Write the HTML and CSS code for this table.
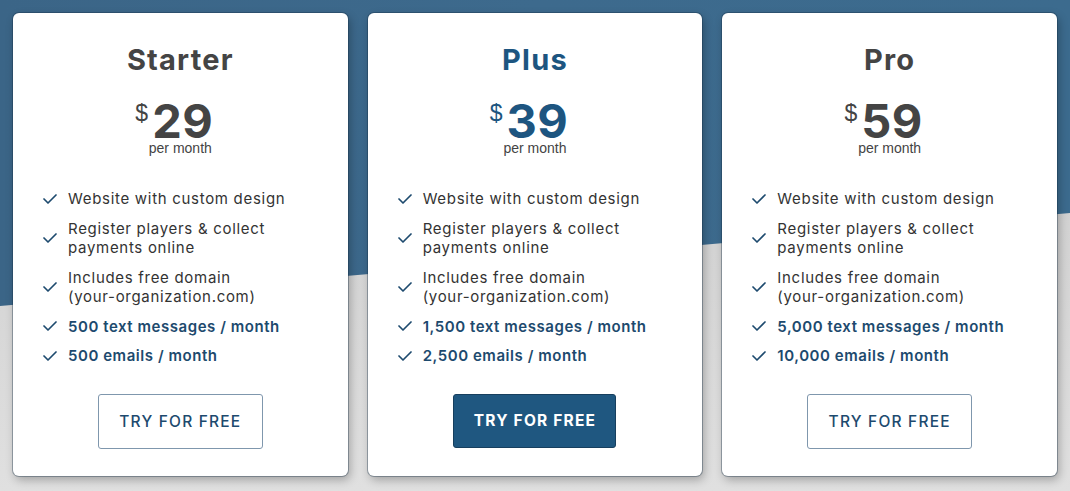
FILE: index.html
```html
<!DOCTYPE html>
<html lang="en">
<head>
<meta charset="utf-8">
<title>Pricing</title>
<link rel="stylesheet" href="styles.css">
</head>
<body>
<main class="page">
  <section class="plans">
    <article class="card">
      <h2 class="plan-name">Starter</h2>
      <div class="price"><span class="cur">$</span><span class="amt">29</span></div>
      <div class="period">per month</div>
      <ul class="features">
        <li><svg class="chk" viewBox="0 0 14 10"><polyline points="1,5 5,9 13,1"/></svg><span>Website with custom design</span></li>
        <li><svg class="chk" viewBox="0 0 14 10"><polyline points="1,5 5,9 13,1"/></svg><span>Register players &amp; collect<br>payments online</span></li>
        <li><svg class="chk" viewBox="0 0 14 10"><polyline points="1,5 5,9 13,1"/></svg><span>Includes free domain<br>(your-organization.com)</span></li>
        <li class="hi"><svg class="chk" viewBox="0 0 14 10"><polyline points="1,5 5,9 13,1"/></svg><span>500 text messages / month</span></li>
        <li class="hi"><svg class="chk" viewBox="0 0 14 10"><polyline points="1,5 5,9 13,1"/></svg><span>500 emails / month</span></li>
      </ul>
      <a class="btn" href="#">TRY FOR FREE</a>
    </article>
    <article class="card featured">
      <h2 class="plan-name">Plus</h2>
      <div class="price"><span class="cur">$</span><span class="amt">39</span></div>
      <div class="period">per month</div>
      <ul class="features">
        <li><svg class="chk" viewBox="0 0 14 10"><polyline points="1,5 5,9 13,1"/></svg><span>Website with custom design</span></li>
        <li><svg class="chk" viewBox="0 0 14 10"><polyline points="1,5 5,9 13,1"/></svg><span>Register players &amp; collect<br>payments online</span></li>
        <li><svg class="chk" viewBox="0 0 14 10"><polyline points="1,5 5,9 13,1"/></svg><span>Includes free domain<br>(your-organization.com)</span></li>
        <li class="hi"><svg class="chk" viewBox="0 0 14 10"><polyline points="1,5 5,9 13,1"/></svg><span>1,500 text messages / month</span></li>
        <li class="hi"><svg class="chk" viewBox="0 0 14 10"><polyline points="1,5 5,9 13,1"/></svg><span>2,500 emails / month</span></li>
      </ul>
      <a class="btn btn-solid" href="#">TRY FOR FREE</a>
    </article>
    <article class="card">
      <h2 class="plan-name">Pro</h2>
      <div class="price"><span class="cur">$</span><span class="amt">59</span></div>
      <div class="period">per month</div>
      <ul class="features">
        <li><svg class="chk" viewBox="0 0 14 10"><polyline points="1,5 5,9 13,1"/></svg><span>Website with custom design</span></li>
        <li><svg class="chk" viewBox="0 0 14 10"><polyline points="1,5 5,9 13,1"/></svg><span>Register players &amp; collect<br>payments online</span></li>
        <li><svg class="chk" viewBox="0 0 14 10"><polyline points="1,5 5,9 13,1"/></svg><span>Includes free domain<br>(your-organization.com)</span></li>
        <li class="hi"><svg class="chk" viewBox="0 0 14 10"><polyline points="1,5 5,9 13,1"/></svg><span>5,000 text messages / month</span></li>
        <li class="hi"><svg class="chk" viewBox="0 0 14 10"><polyline points="1,5 5,9 13,1"/></svg><span>10,000 emails / month</span></li>
      </ul>
      <a class="btn" href="#">TRY FOR FREE</a>
    </article>
  </section>
</main>
</body>
</html>
```

FILE: styles.css
```css
* { box-sizing: border-box; }
html, body { margin: 0; padding: 0; }
body {
  width: 1070px;
  height: 491px;
  overflow: hidden;
  font-family: Inter, "Open Sans", sans-serif;
  background: linear-gradient(to bottom, #c9c9c9 0%, #d6d6d6 60%, #e0e0e0 100%);
}
.page {
  position: relative;
  height: 491px;
}
.page::before {
  content: "";
  position: absolute;
  left: 0; top: 0; right: 0;
  height: 310px;
  background: linear-gradient(to right, #3b6587 0%, #3d6a8d 50%, #3c6b8e 100%);
  clip-path: polygon(0 0, 100% 0, 100% 213px, 0 306px);
}
.plans {
  position: relative;
  display: grid;
  grid-template-columns: repeat(3, 1fr);
  gap: 20px;
  padding: 13px 13px 0;
}
.card {
  background: #fff;
  border-radius: 6px;
  height: 463px;
  padding: 27px 30px 27px;
  display: flex;
  flex-direction: column;
  align-items: center;
  box-shadow: 0 0 0 1px rgba(20, 45, 70, 0.35), 2px 4px 10px rgba(0, 0, 0, 0.28);
}
.plan-name {
  margin: 0;
  font-size: 29px;
  line-height: 40px;
  font-weight: 700;
  color: #444;
  letter-spacing: 1.2px;
}
.featured .plan-name, .featured .price { color: #1d5580; }
.price {
  margin-top: 22px;
  display: flex;
  align-items: flex-start;
  color: #444;
  font-weight: 700;
  padding-right: 12px;
}
.cur {
  font-family: "Liberation Sans", Arial, sans-serif;
  font-weight: 400;
  font-size: 23px;
  line-height: 20px;
  margin-top: 1px;
  margin-right: 4px;
}
.amt {
  font-size: 47px;
  line-height: 38px;
  letter-spacing: 0.5px;
}
.period {
  font-family: "Liberation Sans", Arial, sans-serif;
  font-size: 14px;
  line-height: 16px;
  color: #444;
  margin-top: 0;
}
.features {
  list-style: none;
  margin: 33px 0 0;
  padding: 0;
  align-self: stretch;
  display: flex;
  flex-direction: column;
  gap: 10px;
}
.features li {
  display: flex;
  align-items: center;
  gap: 11px;
  font-size: 15px;
  line-height: 19.5px;
  color: #333;
  letter-spacing: 0.7px;
}
.features li.hi {
  color: #1d4a6e;
  font-weight: 600;
  letter-spacing: 0.55px;
}
.chk {
  width: 14px;
  height: 10px;
  flex: none;
  fill: none;
  stroke: #1d4a6e;
  stroke-width: 1.7;
  stroke-linecap: round;
  stroke-linejoin: round;
}
.btn {
  margin-top: 28px;
  width: 165px;
  height: 55px;
  display: flex;
  align-items: center;
  justify-content: center;
  border: 1px solid #7f97ad;
  border-radius: 3px;
  color: #1d4a6e;
  text-decoration: none;
  font-size: 15.5px;
  letter-spacing: 1.2px;
  font-weight: 500;
}
.btn-solid {
  background: #1f5780;
  border-color: #173f5e;
  color: #fff;
  font-weight: 700;
  width: 163px;
  height: 54px;
}
```
